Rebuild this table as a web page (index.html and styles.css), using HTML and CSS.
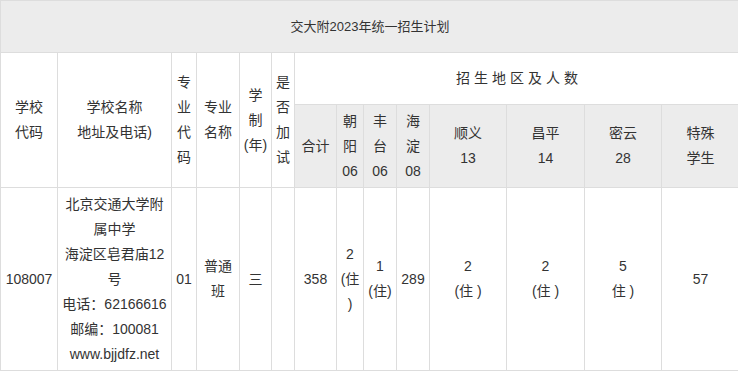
FILE: index.html
```html
<!DOCTYPE html>
<html lang="zh-CN">
<head>
<meta charset="utf-8">
<title>交大附2023年统一招生计划</title>
<link rel="stylesheet" href="styles.css">
</head>
<body>
<table class="plan">
  <colgroup>
    <col class="w57"><col class="w114"><col class="w25"><col class="w43"><col class="w32"><col class="w23">
    <col class="w42"><col class="w27"><col class="w33"><col class="w33"><col class="w77"><col class="w78"><col class="w77"><col class="w78">
  </colgroup>
  <tr class="r-title">
    <td colspan="14" class="gray title">交大附2023年统一招生计划</td>
  </tr>
  <tr class="r-head1">
    <td rowspan="2">学校<br>代码</td>
    <td rowspan="2">学校名称<br>地址及电话)</td>
    <td rowspan="2">专<br>业<br>代<br>码</td>
    <td rowspan="2">专业<br>名称</td>
    <td rowspan="2">学<br>制<br>(年)</td>
    <td rowspan="2">是<br>否<br>加<br>试</td>
    <td colspan="8" class="spaced">招生地区及人数</td>
  </tr>
  <tr class="r-head2">
    <td class="gray">合计</td>
    <td class="gray">朝<br>阳<br>06</td>
    <td class="gray">丰<br>台<br>06</td>
    <td class="gray">海<br>淀<br>08</td>
    <td class="gray">顺义<br>13</td>
    <td class="gray">昌平<br>14</td>
    <td class="gray">密云<br>28</td>
    <td class="gray">特殊<br>学生</td>
  </tr>
  <tr class="r-data">
    <td>108007</td>
    <td>北京交通大学附<br>属中学<br>海淀区皂君庙12<br>号<br>电话：62166616<br>邮编：100081<br>www.bjjdfz.net</td>
    <td>01</td>
    <td>普通<br>班</td>
    <td>三</td>
    <td></td>
    <td>358</td>
    <td>2<br>(住<br>)</td>
    <td>1<br>(住)</td>
    <td>289</td>
    <td>2<br>(住 )</td>
    <td>2<br>(住 )</td>
    <td>5<br>住 )</td>
    <td>57</td>
  </tr>
</table>
</body>
</html>
```
FILE: styles.css
```css
html, body {
  margin: 0;
  padding: 0;
  background: #fff;
  overflow: hidden;
}

.plan {
  border-collapse: collapse;
  table-layout: fixed;
  width: 740px;
  font-family: "Liberation Sans", "Noto Sans CJK SC", sans-serif;
  font-size: 14px;
  line-height: 25px;
  color: #333;
}

.plan td {
  border: 1px solid #dddddd;
  text-align: center;
  vertical-align: middle;
  padding: 0;
  white-space: nowrap;
  overflow: hidden;
}

.w57 { width: 57px; }
.w114 { width: 114px; }
.w25 { width: 25px; }
.w43 { width: 43px; }
.w32 { width: 32px; }
.w23 { width: 23px; }
.w42 { width: 42px; }
.w27 { width: 27px; }
.w33 { width: 33px; }
.w77 { width: 77px; }
.w78 { width: 78px; }

.gray { background: #ececec; }

.title { font-size: 13px; }

.r-title { height: 52px; }
.r-head1 { height: 52px; }
.r-head2 { height: 83px; }
.r-data { height: 183px; }

.spaced {
  letter-spacing: 4px;
  padding-left: 4px !important;
}
```
